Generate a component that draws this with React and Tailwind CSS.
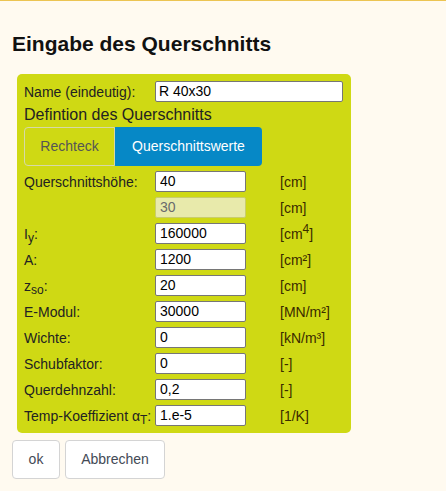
import React from "react";

const rows = [
  { label: <>Querschnittshöhe:</>, value: "40", unit: <>[cm]</> },
  { label: <></>, value: "30", unit: <>[cm]</>, disabled: true },
  { label: <>I<sub className="text-[12px]">y</sub>:</>, value: "160000", unit: <>[cm<sup className="text-[12px]">4</sup>]</> },
  { label: <>A:</>, value: "1200", unit: <>[cm²]</> },
  { label: <>z<sub className="text-[12px]">so</sub>:</>, value: "20", unit: <>[cm]</> },
  { label: <>E-Modul:</>, value: "30000", unit: <>[MN/m²]</> },
  { label: <>Wichte:</>, value: "0", unit: <>[kN/m³]</> },
  { label: <>Schubfaktor:</>, value: "0", unit: <>[-]</> },
  { label: <>Querdehnzahl:</>, value: "0,2", unit: <>[-]</> },
  { label: <>Temp-Koeffizient α<sub className="text-[12px]">T</sub>:</>, value: "1.e-5", unit: <>[1/K]</> },
];

export default function App() {
  return (
    <div
      className="min-h-[491px] w-full bg-[#fffaf0] border-t border-[#ecc452] px-[12px] text-[#222]"
      style={{ fontFamily: '"Liberation Sans", Arial, sans-serif' }}
    >
      <h1 className="mt-[31px] text-[21px] font-bold leading-[24px] text-[#111]">
        Eingabe des Querschnitts
      </h1>
      <div className="mt-[18px] ml-[5px] w-[334px] rounded-[5px] bg-[#cfd914] pl-[7px] pr-[8px] pt-[7px] pb-[7px]">
        <div className="grid grid-cols-[131px_1fr] items-center h-[21px]">
          <span className="text-[14px] leading-[16px]">Name (eindeutig):</span>
          <input
            readOnly
            value="R 40x30"
            className="h-[21px] w-full rounded-[2px] border border-[#767676] bg-white px-[3px] text-[14px] text-black outline-none"
          />
        </div>
        <div className="mt-[4px] text-[16px] leading-[18px]">Defintion des Querschnitts</div>
        <div className="mt-[3px] flex h-[39px] w-[238px]">
          <button className="h-full w-[91px] rounded-l-[4px] border border-[#d6d9a8] text-[14px] text-[#555]">
            Rechteck
          </button>
          <button className="h-full flex-1 rounded-r-[4px] bg-[#0688c6] text-[14px] text-white">
            Querschnittswerte
          </button>
        </div>
        <div className="mt-[5px] grid grid-cols-[131px_125px_1fr] gap-y-[5px] items-center">
          {rows.map((r, i) => (
            <React.Fragment key={i}>
              <span className="text-[14px] leading-[16px] whitespace-nowrap">{r.label}</span>
              <input
                readOnly
                value={r.value}
                className={
                  r.disabled
                    ? "h-[21px] w-[91px] rounded-[2px] border border-[#c9cd6c] bg-[#e8eaab] px-[4px] text-[14px] text-[#6b6b6b] outline-none"
                    : "h-[21px] w-[91px] rounded-[2px] border border-[#767676] bg-white px-[4px] text-[14px] text-black outline-none"
                }
              />
              <span className="text-[14px] leading-[16px] text-[#3a2a00] whitespace-nowrap">{r.unit}</span>
            </React.Fragment>
          ))}
        </div>
      </div>
      <div className="mt-[7px] flex gap-[5px]">
        <button className="h-[39px] w-[48px] rounded-[4px] border border-[#d4d4d4] bg-white text-[14px] text-[#444a55]">
          ok
        </button>
        <button className="h-[39px] w-[100px] rounded-[4px] border border-[#d4d4d4] bg-white text-[14px] text-[#444a55]">
          Abbrechen
        </button>
      </div>
    </div>
  );
}
